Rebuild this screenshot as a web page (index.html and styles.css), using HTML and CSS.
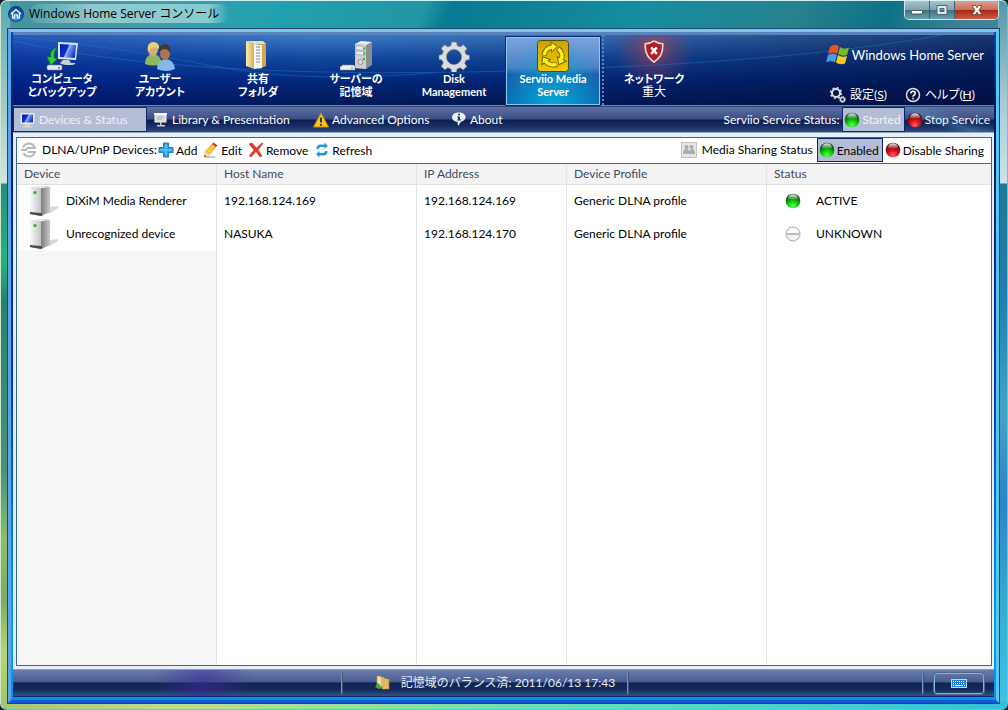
FILE: index.html
```html
<!DOCTYPE html>
<html lang="ja">
<head>
<meta charset="utf-8">
<title>Windows Home Server コンソール</title>
<link rel="stylesheet" href="styles.css">
</head>
<body>
<svg class="defs" aria-hidden="true">
  <defs>
    <radialGradient id="green" cx=".5" cy=".85" r=".8"><stop offset="0" stop-color="#5dff55"/><stop offset=".4" stop-color="#10d010"/><stop offset=".75" stop-color="#067306"/><stop offset="1" stop-color="#023302"/></radialGradient>
    <radialGradient id="red" cx=".5" cy=".85" r=".8"><stop offset="0" stop-color="#ff6a6a"/><stop offset=".4" stop-color="#e01018"/><stop offset=".75" stop-color="#850810"/><stop offset="1" stop-color="#3c0205"/></radialGradient>
    <linearGradient id="gloss" x2="0" y2="1"><stop offset="0" stop-color="#fff" stop-opacity=".95"/><stop offset="1" stop-color="#fff" stop-opacity=".1"/></linearGradient>
    <linearGradient id="screen" x2="1" y2=".4"><stop offset="0" stop-color="#0818a0"/><stop offset=".5" stop-color="#1030d0"/><stop offset=".55" stop-color="#8fb2ff"/><stop offset="1" stop-color="#1a3fd0"/></linearGradient>
    <linearGradient id="metal" x2="1"><stop offset="0" stop-color="#fafafa"/><stop offset="1" stop-color="#c4c4c4"/></linearGradient>
    <linearGradient id="side" x2="1"><stop offset="0" stop-color="#7c7c7c"/><stop offset="1" stop-color="#c9c9c9"/></linearGradient>
    <linearGradient id="folder" x2="1"><stop offset="0" stop-color="#fdebae"/><stop offset="1" stop-color="#d9ae55"/></linearGradient>
    <linearGradient id="gold" x2="0" y2="1"><stop offset="0" stop-color="#c9a200"/><stop offset="1" stop-color="#f0ca00"/></linearGradient>
    <radialGradient id="home" cx=".5" cy=".9" r=".9"><stop offset="0" stop-color="#2e9be8"/><stop offset="1" stop-color="#0b3c96"/></radialGradient>
    <symbol id="orb-green" viewBox="0 0 16 16"><circle cx="8" cy="8" r="7.3" fill="url(#green)"/><path d="M2.500 6.500C3 3 5 1.200 8 1.200S13 3 13.500 6.500Z" fill="url(#gloss)"/></symbol>
    <symbol id="orb-red" viewBox="0 0 16 16"><circle cx="8" cy="8" r="7.3" fill="url(#red)"/><path d="M2.500 6.500C3 3 5 1.200 8 1.200S13 3 13.500 6.500Z" fill="url(#gloss)"/></symbol>
    <symbol id="orb-grey" viewBox="0 0 16 16"><circle cx="8" cy="8" r="7" fill="#f2f2f2" stroke="#aaa"/><path d="M1.500 7h13v2h-13z" fill="#bdbdbd"/><path d="M3 7C3 3.500 5 2 8 2s5 1.500 5 5Z" fill="#fff"/></symbol>
    <symbol id="gear" viewBox="0 0 32 32"><path fill="#dcdcdc" stroke="#777" stroke-width=".6" fill-rule="evenodd" d="M13.500 2h5l.7 3.600 3 1.300 3.200-2.100 3.600 3.600-2.100 3.200 1.300 3 3.300.7v4.200l-3.500.7-1.300 3 2.100 3.200-3.500 3.500-3.200-2.100-3 1.300-.7 3.400h-4.800l-.7-3.500-3-1.300-3.200 2.100-3.500-3.500 2.100-3.200-1.300-3L1 19.500v-4.300l3-.7 1.300-3L3.200 8.300l3.500-3.500 3.200 2.100 3-1.300zM16 9.500a7.500 7.500 0 1 0 .01 0z"/></symbol>
    <symbol id="tower" viewBox="0 0 30 32"><path d="M21 28l8-5v-2l-8 1z" fill="#d8d8d8"/><path d="M1 3l10-2 10 1v25l-9 4-11-2z" fill="#999"/><path d="M1 3l10-2 10 1-9 1.500z" fill="#efefef"/><path d="M1 3l11 .5V28H1z" fill="url(#metal)"/><path d="M12 3.500l9-1.500v25l-9 3z" fill="url(#side)"/><path d="M1 27l11 1 2 2-2 1-11-2z" fill="#4c4c4c"/><circle cx="6" cy="7.500" r="2.300" fill="#cfd8cf"/><circle cx="6" cy="7.500" r="1.500" fill="#38a52d"/></symbol>
    <g id="cycle"><path d="M7.100 15.500A9 9 0 0 1 14.500 7.100" fill="none" stroke="#6d5d00" stroke-width="5.200"/><path d="M14 2L20.500 6.500 14.500 12z" fill="#ffee20" stroke="#6d5d00" stroke-width=".9"/><path d="M7.200 15A9 9 0 0 1 15 7" fill="none" stroke="#ffee20" stroke-width="3.600"/></g>
  </defs>
</svg>
<div class="window">
  <header class="titlebar">
    <svg class="home" viewBox="0 0 16 16"><circle cx="8" cy="8" r="7.500" fill="url(#home)" stroke="#0b3a86"/><path d="M3 8l5-4.500L13 8M4.700 7.500V12h2V8.800h2.600V12h2V7.500" fill="none" stroke="#fff" stroke-width="1.200"/></svg>
    <h1 class="caption">Windows Home Server コンソール</h1>
    <div class="controls">
      <button class="control" aria-label="Minimize"><svg viewBox="0 0 14 12"><rect x="1.500" y="6.500" width="11" height="3.500" rx="1" fill="#fff" stroke="#445a66"/></svg></button>
      <button class="control" aria-label="Maximize"><svg viewBox="0 0 14 12"><path fill-rule="evenodd" d="M2 1.500h10v9H2zM5 4.500h4v3H5z" fill="#dfeaec" stroke="#4a6672"/></svg></button>
      <button class="control close" aria-label="Close"><svg viewBox="0 0 14 12"><path d="M2 1.500h3.500L7 3.800l1.500-2.300H12L9 6l3 4.500H8.500L7 8.200l-1.500 2.300H2L5 6z" fill="#fff" stroke="#6c3a38" stroke-width=".8"/></svg></button>
    </div>
  </header>
  <div class="frame">
    <div class="banner">
      <svg class="rays" viewBox="0 0 980 74" preserveAspectRatio="none" aria-hidden="true"><g fill="none" stroke="#2785dc" stroke-opacity=".4"><path d="M0 6Q170 48 500 38T980-12"/><path d="M0 2Q90 10 190 31T420 40"/></g></svg>
      <nav class="tabs">
        <button class="tab"><svg class="tab-icon" viewBox="0 0 32 32"><path d="M12 2l20 1-2 17-18-1z" fill="#dde3e8"/><path d="M14 4l16 1-1 13-15-1z" fill="url(#screen)"/><path d="M17 20h6l2 3h4q1 2-6 2t-9-2z" fill="#c9d0d4"/><path d="M11 7Q3 11 5 17H1l4 8 6-6-3-1q-1-6 3-11" fill="#2fd42f" stroke="#0b8b14" stroke-width=".7"/><rect x="1" y="25" width="15" height="5" rx="1.500" fill="#e8e8e8" stroke="#888" stroke-width=".6"/><circle cx="13" cy="28" r="1" fill="#2a2"/></svg><span>コンピュータ<br>とバックアップ</span></button>
        <button class="tab"><svg class="tab-icon" viewBox="0 0 32 32"><path d="M1 24q0-9 8-10 8 1 9 10-8 3-17 0" fill="#8fb860"/><ellipse cx="9" cy="9" rx="5" ry="7" fill="#d9ad79"/><path d="M4 12Q2 2 10 2q6 1 5 7-5-3-8-1-1 3-3 4" fill="#e6cf7d"/><path d="M13 29q0-9 9-10 8 1 9 10-9 4-18 0" fill="#86b9e8"/><ellipse cx="21" cy="13" rx="5" ry="7" fill="#ad7650"/><path d="M15 12q-1-7 6-8 7 1 5 9-2-4-5-4-3 0-6 3" fill="#47382f"/></svg><span>ユーザー<br>アカウント</span></button>
        <button class="tab"><svg class="tab-icon" viewBox="0 0 32 32"><path d="M18 3l6 1v22l-7 3z" fill="#d3a64d"/><path d="M12 4l8 1v23l-8 1z" fill="#f7f7f7"/><path d="M14 7h4m-4 3h4m-4 3h4m-4 3h4m-4 3h4m-4 3h4" stroke="#888"/><path d="M4 1l8 3v25l-8-3z" fill="url(#folder)"/><path d="M4 1h17l3 3H12z" fill="#f5dfa0"/></svg><span>共有<br>フォルダ</span></button>
        <button class="tab"><svg class="tab-icon" viewBox="0 0 32 32"><g transform="translate(3 0)"><path d="M12 4l6-3 11 1v23l-6 4-11-1z" fill="#8c8c8c"/><path d="M12 4l6-3 11 1-6 3z" fill="#eee"/><path d="M12 4l11 1v24l-11-1z" fill="#cfcfcf"/><path d="M13 6l9 .8v3.500L13 9.500zm0 5l9 .8v3.500l-9-.8z" fill="#eee" stroke="#888" stroke-width=".5"/><path d="M20 8.500h2M20 13.500h2M20 19h2" stroke="#2fbb2f" stroke-width="1.800"/><circle cx="17.500" cy="22" r="2.500" fill="#ddd" stroke="#777" stroke-width=".7"/></g><path d="M0 27l3-2h10l2 1v4H0z" fill="#eee" stroke="#888" stroke-width=".6"/><path d="M11 28h2" stroke="#2fbb2f"/></svg><span>サーバーの<br>記憶域</span></button>
        <button class="tab"><svg class="tab-icon"><use href="#gear"/></svg><span>Disk<br>Management</span></button>
        <button class="tab selected" aria-current="page"><svg class="tab-icon" viewBox="0 0 32 32"><rect x=".5" y=".5" width="31" height="31" rx="3" fill="url(#gold)" stroke="#5b4b00"/><use href="#cycle"/><use href="#cycle" transform="rotate(120 16 16)"/><use href="#cycle" transform="rotate(240 16 16)"/></svg><span>Serviio Media<br>Server</span></button>
        <button class="tab network"><svg class="tab-icon shield" viewBox="0 0 24 28"><path d="M12 1q5 3.500 10.500 3.500Q24 19 12 27 0 19 1.500 4.500 7 4.500 12 1" fill="#b51c25" stroke="#e4dddd" stroke-width="2"/><path d="M8.500 9l7 8m0-8l-7 8" stroke="#fff" stroke-width="3"/></svg><span>ネットワーク<br><span class="normal">重大</span></span></button>
      </nav>
      <div class="brand">
        <div class="logo"><svg class="flag" viewBox="0 0 24 22"><path d="M4 3q5-4 9-.5L11 10Q7 7 2 10z" fill="#e95420"/><path d="M14 3q4 3 9 .5L21 11q-4 2-9-1z" fill="#76b82c"/><path d="M2 11q5-3 9 0l-2 7.500Q5 16 0 18.500z" fill="#4a9bdf"/><path d="M12 11q4 3 9 1l-2 7.500q-5 2-9-1z" fill="#fbc71d"/></svg><span>Windows Home Server</span></div>
        <div class="links">
          <a href="#settings"><svg class="i16" viewBox="0 0 16 16"><g fill="none" stroke="#ddd"><circle cx="6" cy="6" r="4" stroke-width="2"/><circle cx="6" cy="6" r="5.300" stroke-width="1.600" stroke-dasharray="2 2.160"/><circle cx="12.500" cy="12.500" r="2" stroke-width="1.300"/><circle cx="12.500" cy="12.500" r="3" stroke-width="1" stroke-dasharray="1.200 1.150"/></g></svg><span>設定(<u>S</u>)</span></a>
          <a href="#help"><svg class="i16" viewBox="0 0 16 16"><circle cx="8" cy="8" r="6.500" fill="none" stroke="#ddd" stroke-width="1.500"/><path d="M5.700 6.500Q6 4.300 8.200 4.300q2 .2 2 2 0 1.200-1.300 1.900-.9.500-.9 1.500M8 10.800v1.500" fill="none" stroke="#fff" stroke-width="1.600"/></svg><span>ヘルプ(<u>H</u>)</span></a>
        </div>
      </div>
    </div>
    <div class="menubar">
      <button class="menu current"><svg class="i16" viewBox="0 0 16 16"><rect x=".5" y="1" width="14" height="11" rx="1" fill="#eee9d7"/><rect x="2" y="2.500" width="11" height="8" fill="url(#screen)"/><path d="M5 12h5v2h2v1.500H3V14h2z" fill="#d9d5c4"/></svg>Devices &amp; Status</button>
      <button class="menu library"><svg class="i16" viewBox="0 0 16 16"><rect x="1" y="1" width="13" height="2" fill="#fff"/><rect x="2" y="3" width="11" height="7" fill="#ddd" stroke="#eee"/><path d="M4 5h7M4 7h5" stroke="#aaa"/><path d="M7 10h1.500v3H12v1.500H4V13h3z" fill="#ccc"/></svg>Library &amp; Presentation</button>
      <button class="menu advanced"><svg class="i16" viewBox="0 0 16 16"><path d="M8 1l7.500 14H.5z" fill="#f8c818" stroke="#c78a08" stroke-linejoin="round"/><path d="M8 5.500v5M8 12v1.800" stroke="#222" stroke-width="1.800"/></svg>Advanced Options</button>
      <button class="menu"><svg class="i16" viewBox="0 0 16 16"><path d="M7.500.5C12 .5 14.500 2.500 14.500 5S12 9.500 10 9.800L7 14l-.5-4Q1 9 1 5.300 1.500.5 7.500.5" fill="#eef5fb"/><path d="M7 1.800h2v1.500H7zM6 4.500h3v3h1v1H6v-1h1v-2H6z" fill="#164077"/></svg>About</button>
      <span class="push">Serviio Service Status:</span>
      <button class="state light"><svg class="i16"><use href="#orb-green"/></svg>Started</button>
      <button class="state plain light"><svg class="i16"><use href="#orb-red"/></svg>Stop Service</button>
    </div>
    <main class="content">
      <div class="panel">
        <div class="toolbar">
          <svg class="i16" viewBox="0 0 16 16"><g fill="none" stroke="#b8b8b8" stroke-width="2"><path d="M2 6a6.200 6.200 0 0 1 11.500-1M14 10a6.200 6.200 0 0 1-11.500 1"/><path d="M0 8h5l1.500-2H15M6.500 10H15" stroke-width="1.800"/></g></svg>
          <span class="label tight">DLNA/UPnP Devices:</span>
          <button class="tool"><svg class="i16" viewBox="0 0 16 16"><path d="M5.500 1h5v4.500H15v5h-4.500V15h-5v-4.500H1v-5h4.500z" fill="#2b9ae2" stroke="#1c7ec4"/><path d="M8 2.500v11M2.500 8h11" stroke="#58bdf6" stroke-width="2"/></svg>Add</button>
          <button class="tool"><svg class="i16" viewBox="0 0 16 16"><path d="M2 15h10" stroke="#bbb" stroke-width="1.500"/><path d="M9 2l4 3-7 8-4.500 2L2 10z" fill="#f8c63c" stroke="#c99428" stroke-width=".5"/><path d="M2 10l4 3-4.500 2z" fill="#f6dfb5"/><path d="M9 2l1.500-1.500 4 3L13 5z" fill="#c23a3c"/><path d="M1.500 15l.3-2 1.500 1.200z" fill="#222"/></svg>Edit</button>
          <button class="tool"><svg class="i16" viewBox="0 0 16 16"><path d="M1 2l3-1 4.500 5L14 1l1 .5L10 8l4 6-2 1-4-5.500L3 15l-2-1 5-6z" fill="#e33a28" stroke="#bb2418" stroke-width=".5"/></svg>Remove</button>
          <button class="tool"><svg class="i16" viewBox="0 0 16 16"><path d="M2.500 7Q2 3 6 2.500h4.500V.5L14 4l-3.500 3V5H7Q5 5 5 7z" fill="#2898dc"/><path d="M2.500 7Q2 3 6 2.500h4.500V.5L14 4l-3.500 3V5H7Q5 5 5 7z" fill="#2898dc" transform="rotate(180 8 8)"/></svg>Refresh</button>
          <svg class="i16 push" viewBox="0 0 16 16"><rect x=".5" y=".5" width="15" height="15" fill="#e6e6e6" stroke="#c2c2c2"/><g fill="#aaa"><circle cx="5.500" cy="5" r="2"/><circle cx="10.500" cy="5" r="2"/><path d="M2 12q0-5 3.500-5T9 12zM9 12q-1-5 2-5t3 5z"/></g></svg>
          <span class="label">Media Sharing Status</span>
          <button class="state"><svg class="i16"><use href="#orb-green"/></svg>Enabled</button>
          <button class="state plain"><svg class="i16"><use href="#orb-red"/></svg>Disable Sharing</button>
        </div>
        <div class="list">
          <table class="devices">
            <colgroup><col class="c200"><col class="c200"><col class="c150"><col class="c200"><col></colgroup>
            <thead><tr><th>Device</th><th>Host Name</th><th>IP Address</th><th>Device Profile</th><th>Status</th></tr></thead>
            <tbody>
              <tr><td><div class="device"><svg class="tower"><use href="#tower"/></svg>DiXiM Media Renderer</div></td><td>192.168.124.169</td><td>192.168.124.169</td><td>Generic DLNA profile</td><td><div class="status"><svg class="i16"><use href="#orb-green"/></svg>ACTIVE</div></td></tr>
              <tr><td><div class="device"><svg class="tower"><use href="#tower"/></svg>Unrecognized device</div></td><td>NASUKA</td><td>192.168.124.170</td><td>Generic DLNA profile</td><td><div class="status"><svg class="i16"><use href="#orb-grey"/></svg>UNKNOWN</div></td></tr>
              <tr class="filler"><td></td><td></td><td></td><td></td><td></td></tr>
            </tbody>
          </table>
        </div>
      </div>
    </main>
    <footer class="statusbar">
      <div class="slot side"></div>
      <div class="slot message"><svg class="i16" viewBox="0 0 16 16"><path d="M2 1h3l1 1h3v10H2zM7 3h3l1 1h3v10H7z" fill="url(#folder)" stroke="#b98c33" stroke-width=".6"/><path d="M0 12l3-4 3 3H4.500q1 1.500 3 0Q6 15.500 2 13z" fill="#35b52a"/></svg>記憶域のバランス済: 2011/06/13 17:43</div>
      <div class="slot side"></div>
      <button class="keyboard" aria-label="Keyboard"><svg viewBox="0 0 16 9"><rect x=".5" y=".5" width="15" height="8" fill="#1f7be0" stroke="#b8dcff"/><path d="M2 2.500h12M2 4.500h12" stroke="#fff" stroke-dasharray="1 1"/><path d="M2 6.500h1m1 0h8m1 0h1" stroke="#fff"/></svg></button>
    </footer>
  </div>
</div>
</body>
</html>
```
FILE: styles.css
```css
* { box-sizing: border-box; }

html, body { height: 100%; margin: 0; }

body {
  background: #0a2526;
  color: #000;
  font: 12px/16px Lato, "Noto Sans CJK JP", sans-serif;
}

button {
  font: inherit;
  color: inherit;
  background: none;
  border: 0;
  margin: 0;
  padding: 0;
}

.defs { position: absolute; width: 0; height: 0; }
.i16 { width: 16px; height: 16px; flex: none; }
.push { margin-left: auto; }

.window {
  height: 100%;
  display: flex;
  flex-direction: column;
  padding: 0 8px 6px 7px;
  border: 1px solid #4ccdea;
  border-top-color: #d5f0f2;
  border-left-color: #cfe8d0;
  border-radius: 7px;
  background:
    linear-gradient(90deg, #a9c46c, #c0dd8a 17%, #98e098 34%, #5ee0b8 60%, #30c0d8) bottom / 100% 8px no-repeat,
    linear-gradient(#58aab4, #9fcac8 100px, #d3e2e0 182px, #2b8b80 183px, #26b47c 260px, #2a8070 300px, #4c9276 470px, #90bd6c 540px, #7eab66 600px, #b9d470 650px, #a4c46c) left / 9px 100% no-repeat,
    linear-gradient(#5398ac, #a9cbd3 100px, #cfe2e8 182px, #1f7898 183px, #237fac 300px, #42a4c4 410px, #2d84c4 500px, #38aace 600px, #40c4e6) right / 9px 100% no-repeat,
    linear-gradient(112deg, #48929b 0, #3ba0ad 12%, #22a0af 22%, #2396a3 33%, #087a93 35%, #168da0 50%, #27818f 62%, #0e7187 69%, #3c8298 75%, #5596a9);
}

.titlebar {
  display: flex;
  align-items: flex-start;
  height: 28px;
  flex: none;
}
.home { width: 16px; height: 16px; margin: 5px 5px 0 0; }
.caption {
  margin: 3px 0 0;
  padding: 0 10px 0 0;
  font: 12px/19px "Open Sans", "Noto Sans CJK JP", sans-serif;
  background: linear-gradient(90deg, rgba(225, 242, 243, .1), rgba(225, 242, 243, .5) 30%, rgba(225, 242, 243, .5) 90%, rgba(225, 242, 243, 0));
  border-radius: 10px;
}
.controls {
  display: flex;
  margin-left: auto;
  border: 1px solid #d2e5e8;
  border-top: 0;
  border-radius: 0 0 5px 5px;
  overflow: hidden;
}
.control {
  width: 25px;
  height: 18px;
  border-right: 1px solid #37626e;
  background: linear-gradient(#a7c4cb, #7ea4b0 48%, #3f7180 52%, #6aa0ab);
}
.control svg { width: 14px; height: 12px; display: block; margin: 0 auto; }
.close { width: 43px; border: 0; background: linear-gradient(#dea093, #ca6d5b 48%, #a92814 52%, #cb5b45); }

.frame {
  flex: 1;
  min-height: 0;
  display: flex;
  flex-direction: column;
  border: 3px solid #2c83e4;
  border-color: #79c7f8 #56c8f5 #1459d4 #58a5ee;
  outline: 1px solid #28435a;
  padding: 0 2px 3px;
  background: linear-gradient(#17469c, #021960 80px, #0636b8 350px, #00a1f6 600px, #0890f0);
}

.banner {
  position: relative;
  flex: none;
  display: flex;
  justify-content: space-between;
  height: 74px;
  padding-top: 5px;
  border-top: 3px solid #5983bd;
  border-bottom: 1px solid #6b83be;
  color: #fff;
  background:
    radial-gradient(circle at 641px 14px, rgba(190, 65, 75, .8) 0, rgba(150, 60, 90, .4) 18px, transparent 40px),
    linear-gradient(90deg, rgba(0, 24, 160, .35), transparent 30%, rgba(0, 8, 50, .15) 60%, rgba(0, 8, 50, .6)),
    linear-gradient(#3d7cc4, #11479c 34%, #02287a 66%, #021958);
}
.rays { position: absolute; inset: 0; width: 100%; height: 100%; pointer-events: none; }
.tabs { position: relative; display: flex; }
.tab {
  width: 98px;
  display: flex;
  flex-direction: column;
  align-items: center;
  font-size: 11px;
  font-weight: 700;
  line-height: 13px;
  font-feature-settings: "palt";
}
.tab-icon { width: 32px; height: 32px; flex: none; }
.selected {
  width: 94px;
  margin: -3px 1px 0 3px;
  padding-top: 2px;
  border: 1px solid #8bc9ee;
  outline: 1px solid #042b78;
  background: radial-gradient(ellipse at 50% 110%, #08a9da, transparent 75%), linear-gradient(#79a5dc, #4c82c5 45%, #1a60ad 55%, #0671b4);
}
.network { margin: -5px 0 0 1px; padding-top: 5px; width: 102px; border-left: 2px dotted #5d87b8; }
.shield { height: 23px; width: 20px; margin-bottom: 9px; }
.normal { font-size: 12px; font-weight: 400; }

.brand {
  position: relative;
  display: flex;
  flex-direction: column;
  justify-content: space-between;
  align-items: flex-end;
  padding: 4px 10px 2px 0;
}
.logo { display: flex; align-items: center; gap: 2px; font-size: 13px; line-height: 22px; }
.flag { width: 24px; height: 22px; }
.links { display: flex; gap: 18px; padding-right: 9px; font-feature-settings: "palt"; }
.links a { display: flex; align-items: center; gap: 4px; color: #fff; text-decoration: none; }

.menubar {
  flex: none;
  display: flex;
  align-items: stretch;
  height: 27px;
  color: #fff;
  line-height: 25px;
  border-bottom: 1px solid #8badc4;
  border-top: 1px solid #244776;
  background:
    linear-gradient(20deg, transparent 75%, rgba(85, 160, 190, .35) 80%, transparent 87%) right / 370px 100% no-repeat,
    linear-gradient(#5f6fa4, #3c4e86 48%, #0b1e50 52%, #172c62 75%, #31497b);
}
.menu {
  display: flex;
  align-items: center;
  gap: 3px;
  padding: 0 6px;
  text-align: left;
  white-space: nowrap;
}
.current { width: 134px; background: #b5bdd5; color: #eef1f8; border: 1px solid #0b2c72; }
.library { width: 160px; }
.advanced { width: 138px; }
.state {
  display: flex;
  align-items: center;
  gap: 2px;
  padding: 0 3px 0 1px;
  border: 1px solid #0a246a;
  background: #b5bdd5;
  white-space: nowrap;
}
.light { color: #f2f4fa; }
.plain { background: none; border-color: transparent; }
.menubar .push { padding-right: 3px; }

.content {
  flex: 1;
  min-height: 0;
  display: flex;
  padding: 4px 2px 3px 3px;
  background: #e8edfa;
}
.panel {
  flex: 1;
  min-width: 0;
  display: flex;
  flex-direction: column;
  border: 1px solid #3566a8;
  background: #fff;
}
.toolbar {
  flex: none;
  display: flex;
  align-items: stretch;
  height: 26px;
  padding: 0 3px 1px 4px;
  line-height: 23px;
  border-bottom: 1px solid #3566a8;
}
.toolbar > svg { align-self: center; }
.toolbar .label { margin: 0 4px 0 5px; }
.toolbar .tight { margin-right: 1px; }
.tool { display: flex; align-items: center; gap: 2px; margin-right: 6px; }

.list { flex: 1; min-height: 0; }
.devices {
  width: 100%;
  height: 100%;
  table-layout: fixed;
  border-collapse: separate;
  border-spacing: 0;
}
.c200 { width: 200px; }
.c150 { width: 150px; }
.devices th {
  height: 21px;
  padding: 0 7px;
  text-align: left;
  font-weight: 400;
  line-height: 18px;
  color: #3c4c66;
  background: #f3f3f3;
  border-bottom: 1px solid #e2e2e2;
}
.devices td { height: 33px; padding: 0 7px 1px; }
.devices th:not(:last-child), .devices td:not(:last-child) { border-right: 1px solid #e4e4e4; }
.devices td:first-child { padding-left: 12px; }
.devices .filler td { height: auto; }
.filler td:first-child { background: #f6f6f6; }
.device { display: flex; align-items: center; gap: 7px; }
.tower { width: 30px; height: 32px; }
.status { display: flex; align-items: center; gap: 15px; padding-left: 11px; }

.statusbar {
  flex: none;
  display: flex;
  align-items: center;
  height: 28px;
  padding-right: 10px;
  color: #e5edf6;
  border-top: 1px solid #37bde9;
  border-bottom: 1px solid #0a2d66;
  background:
    radial-gradient(circle at 190px 12px, rgba(64, 42, 150, .6), transparent 50px),
    linear-gradient(#6a7dab, #4a5d93 45%, #0e2453 50%, #132b5c 75%, #35527f);
}
.slot { height: 21px; border-right: 2px ridge #7397c0; }
.side { flex: 1; }
.side:nth-child(3) { flex: 0 1 295px; margin-right: 10px; }
.message {
  flex: none;
  width: 286px;
  display: flex;
  align-items: center;
  justify-content: center;
  gap: 10px;
  padding-left: 20px;
}
.keyboard {
  width: 50px;
  height: 21px;
  border: 1px solid #7fb9ce;
  border-radius: 3px;
  outline: 1px solid #51688b;
}
.keyboard svg { width: 16px; height: 9px; display: block; margin: 0 auto; }
```
